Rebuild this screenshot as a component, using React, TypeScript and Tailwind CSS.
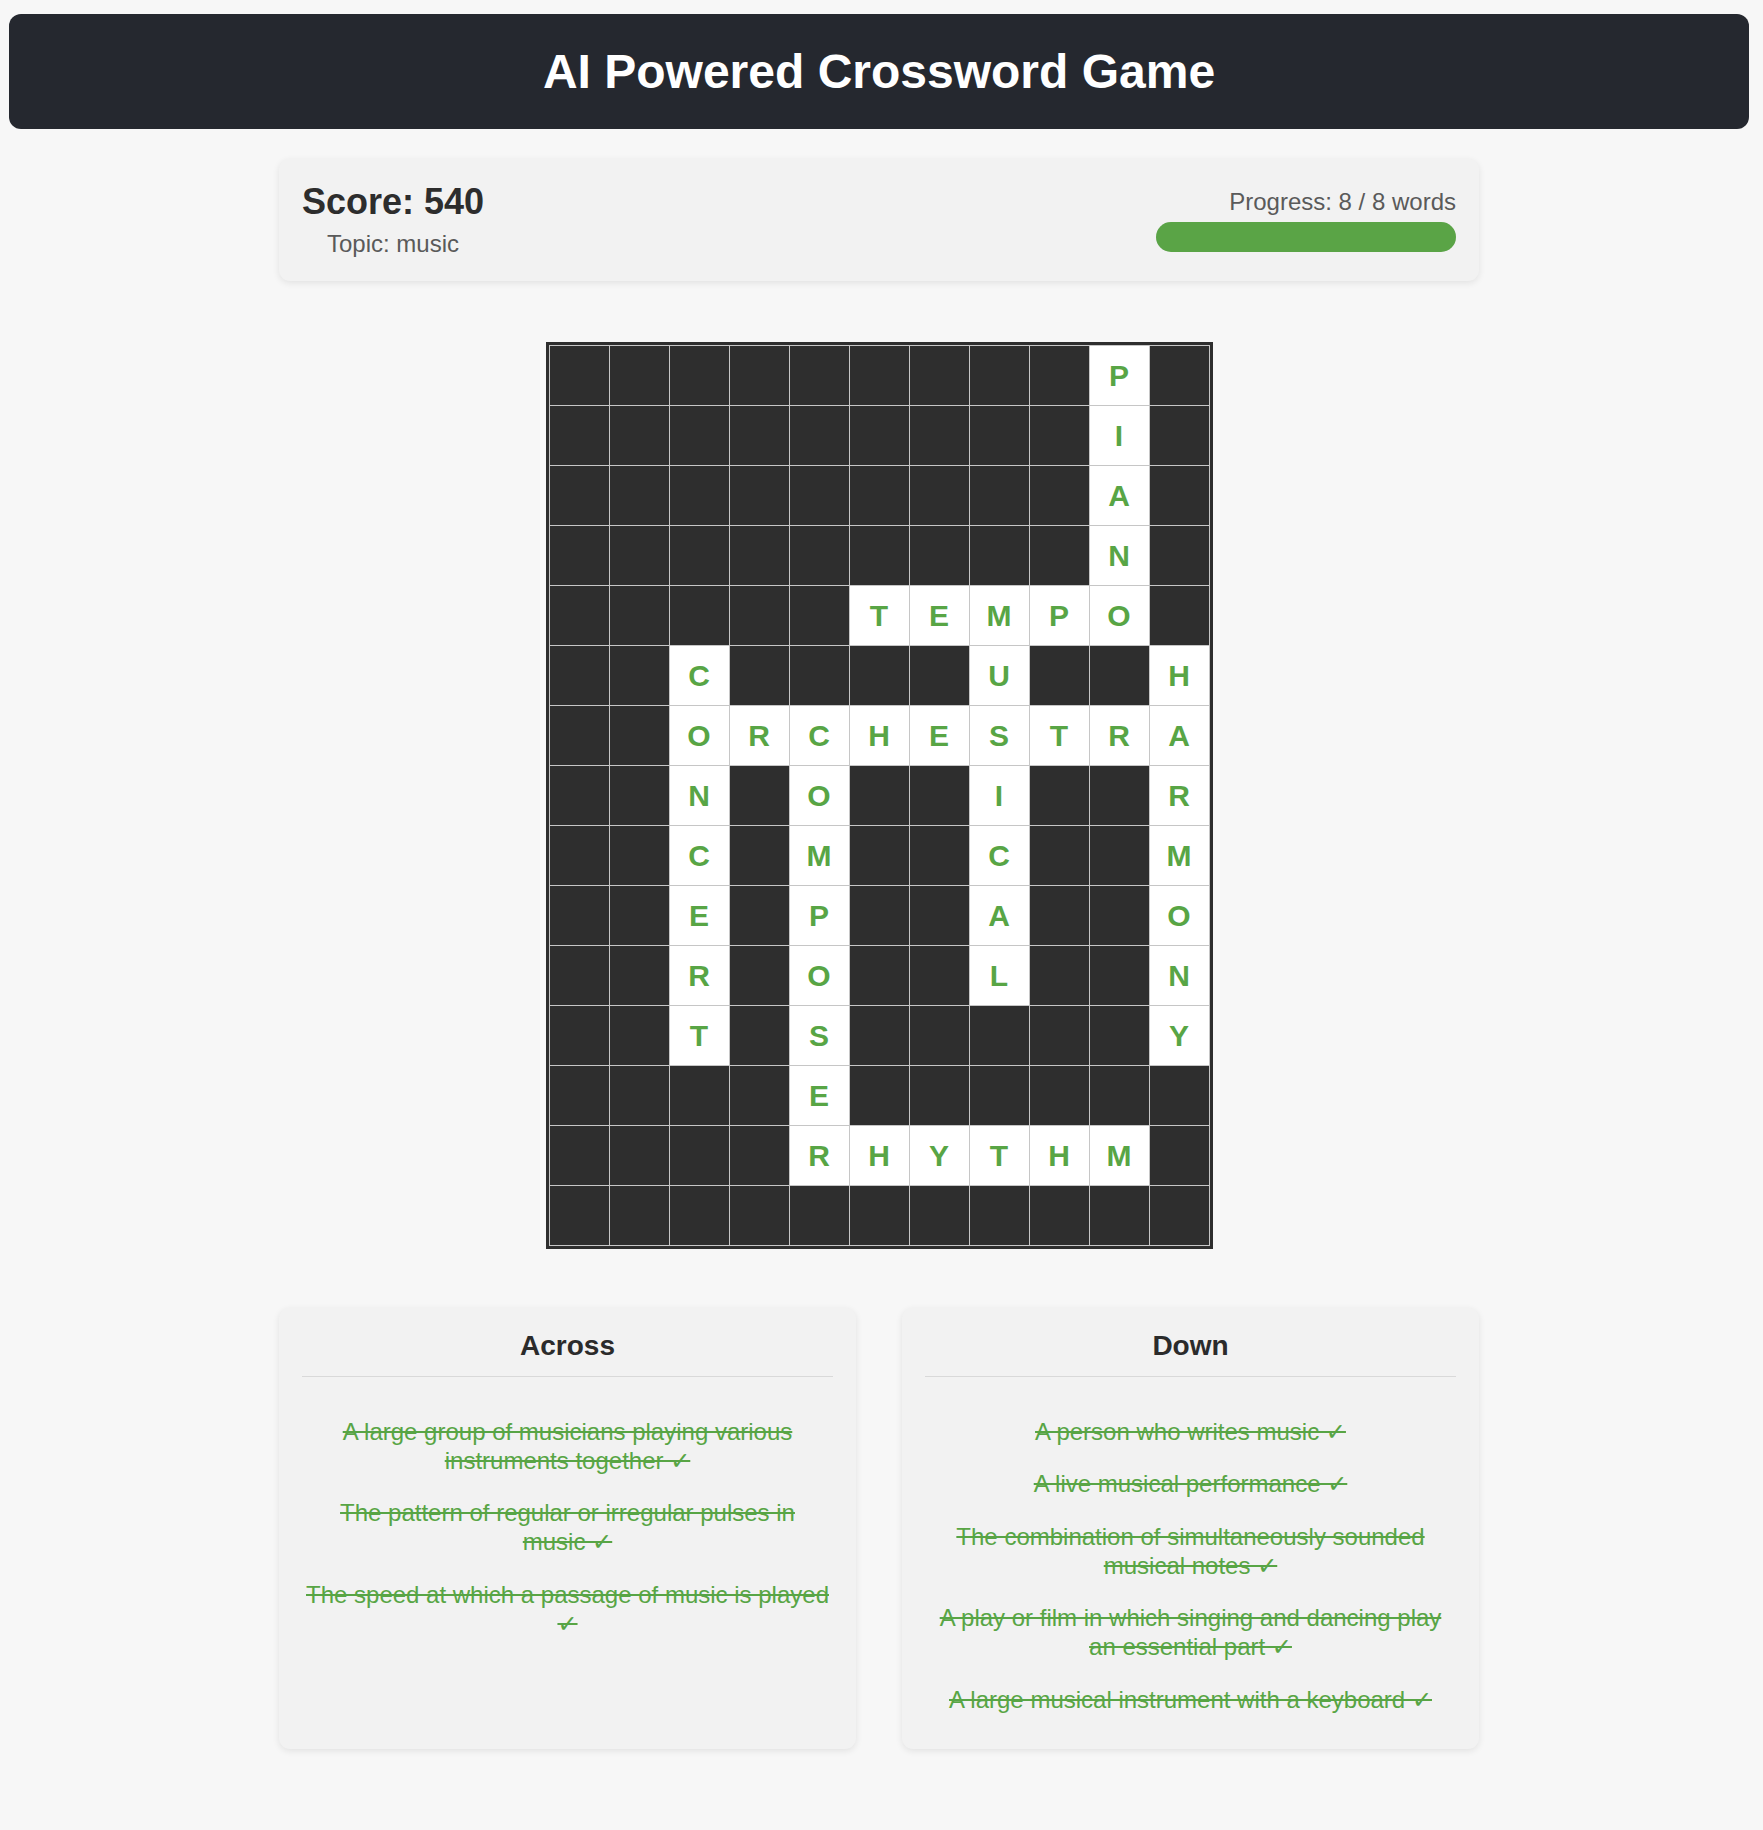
import React from "react";

const ROWS: string[] = [
  ".........P.",
  ".........I.",
  ".........A.",
  ".........N.",
  ".....TEMPO.",
  "..C....U..H",
  "..ORCHESTRA",
  "..N.O..I..R",
  "..C.M..C..M",
  "..E.P..A..O",
  "..R.O..L..N",
  "..T.S.....Y",
  "....E......",
  "....RHYTHM.",
  "...........",
];

const ACROSS: string[][] = [
  ["A large group of musicians playing various", "instruments together ✓"],
  ["The pattern of regular or irregular pulses in", "music ✓"],
  ["The speed at which a passage of music is played", "✓"],
];

const DOWN: string[][] = [
  ["A person who writes music ✓"],
  ["A live musical performance ✓"],
  ["The combination of simultaneously sounded", "musical notes ✓"],
  ["A play or film in which singing and dancing play", "an essential part ✓"],
  ["A large musical instrument with a keyboard ✓"],
];

function ClueCard({ title, clues }: { title: string; clues: string[][] }) {
  return (
    <div className="flex-1 rounded-[11px] bg-[#f2f2f2] px-[23px] pt-[22px] pb-[23px] shadow-[0_2px_7px_rgba(0,0,0,0.09)]">
      <h3 className="border-b border-[#d9d9d9] pb-[15px] text-center text-[28px] leading-[31px] font-bold text-[#2b2b2b]">
        {title}
      </h3>
      <ul className="-mx-[8px] mt-[28px] flex flex-col">
        {clues.map((lines, i) => (
          <li
            key={i}
            className="py-[11.75px] text-center text-[24px] leading-[29px] text-[#58a545] line-through decoration-[#58a545]"
          >
            {lines.map((l, j) => (
              <React.Fragment key={j}>
                {j > 0 && <br />}
                {l}
              </React.Fragment>
            ))}
          </li>
        ))}
      </ul>
    </div>
  );
}

export default function App() {
  return (
    <div
      className="min-h-[1830px] bg-[#f7f7f7] pt-[14px] pl-[9px] pr-[14px]"
      style={{ fontFamily: '"Liberation Sans", Arial, "DejaVu Sans", sans-serif' }}
    >
      <header className="flex h-[115px] items-center justify-center rounded-[12px] bg-[#25282f]">
        <h1 className="text-[48px] leading-[54px] font-bold text-white">AI Powered Crossword Game</h1>
      </header>

      <div className="mx-auto mt-[30px] w-[1200px]">
        <div className="flex items-center justify-between rounded-[11px] bg-[#f2f2f2] p-[23px] shadow-[0_2px_7px_rgba(0,0,0,0.09)]">
          <div>
            <div className="text-[36px] leading-[40px] font-bold text-[#2d2d2d]">Score: 540</div>
            <div className="mt-[8px] ml-[25px] text-[24px] leading-[28px] text-[#5a5a5a]">Topic: music</div>
          </div>
          <div className="flex flex-col items-end">
            <div className="text-[24px] leading-[28px] text-[#5a5a5a]">Progress: 8 / 8 words</div>
            <div className="mt-[6.7px] h-[30px] w-[300px] rounded-full bg-[#e0e0e0]">
              <div className="h-full w-full rounded-full bg-[#5aa446]" />
            </div>
          </div>
        </div>
      </div>

      <div className="mt-[61px] flex justify-center">
        <div className="border-[3px] border-[#2e2e2e] bg-[#c6c6c6] p-px">
          <div className="grid grid-cols-[repeat(11,59px)] grid-rows-[repeat(15,59px)] gap-px">
            {ROWS.flatMap((row, r) =>
              row.split("").map((ch, c) =>
                ch === "." ? (
                  <div key={`${r}-${c}`} className="bg-[#2e2e2e]" />
                ) : (
                  <div
                    key={`${r}-${c}`}
                    className="flex items-center justify-center bg-white text-[30px] font-bold text-[#58a545]"
                  >
                    {ch}
                  </div>
                )
              )
            )}
          </div>
        </div>
      </div>

      <div className="mx-auto mt-[59px] flex w-[1200px] items-stretch gap-[46px]">
        <ClueCard title="Across" clues={ACROSS} />
        <ClueCard title="Down" clues={DOWN} />
      </div>
    </div>
  );
}
